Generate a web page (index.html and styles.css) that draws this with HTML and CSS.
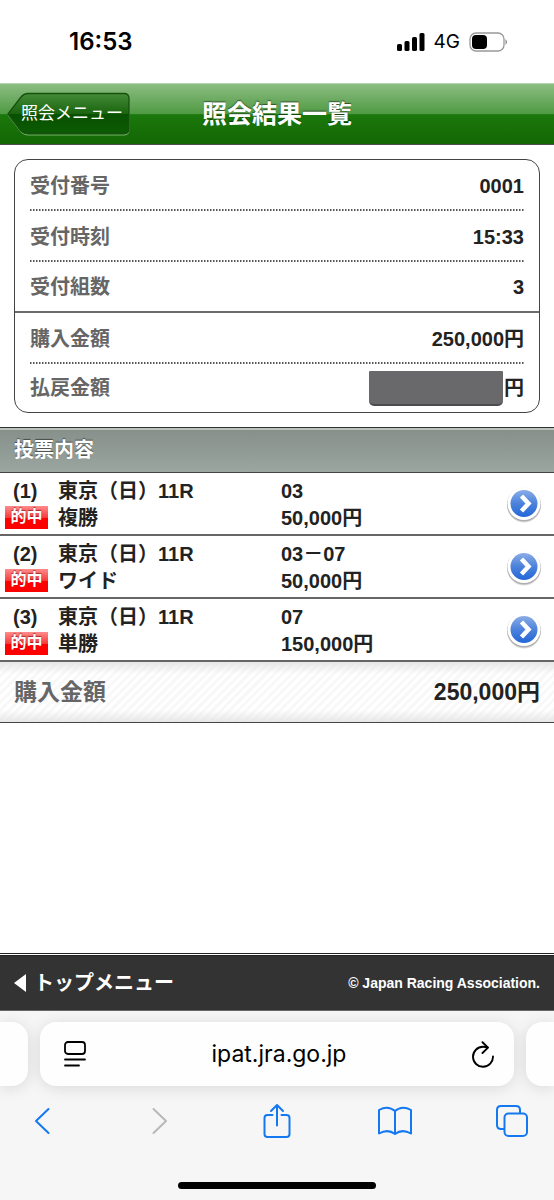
FILE: index.html
```html
<!DOCTYPE html>
<html lang="ja">
<head>
  <meta charset="UTF-8">
  <meta name="viewport" content="width=device-width, initial-scale=1.0">
  <title>照会結果一覧</title>
  <link rel="stylesheet" href="styles.css">
</head>
<body>
<div class="status-bar">
  <span class="time">16:53</span>
  <div class="status-icons">
    <svg width="28" height="19" viewBox="0 0 28 19">
      <rect x="0" y="12" width="5" height="7" rx="1.5"/>
      <rect x="7.500" y="9" width="5" height="10" rx="1.5"/>
      <rect x="15" y="5" width="5" height="14" rx="1.5"/>
      <rect x="22.500" y="1" width="5" height="18" rx="1.5"/>
    </svg>
    <span class="network">4G</span>
    <svg width="39" height="20" viewBox="0 0 39 20">
      <rect x="1" y="1" width="34" height="18" rx="6" fill="none" stroke="#999" stroke-width="1.3"/>
      <rect x="3" y="3" width="15" height="14" rx="4"/>
      <path d="M36.500 7 q3 3 0 6z" fill="#888"/>
    </svg>
  </div>
</div>

<header class="header">
  <a href="#" class="back-btn">
    <svg width="123" height="44" viewBox="0 0 123 44">
      <defs>
        <linearGradient id="backFill" x1="0" y1="0" x2="0" y2="1">
          <stop offset="0" stop-color="#458b38"/>
          <stop offset="0.5" stop-color="#1b650f"/>
          <stop offset="0.51" stop-color="#085000"/>
          <stop offset="1" stop-color="#0c5b03"/>
        </linearGradient>
      </defs>
      <path d="M1 23 L14 6 Q17 3 21 3 H117 Q122 3 122 8 V38 Q122 43 117 43 H21 Q17 43 14 40z" fill="none" stroke="#7bb671"/>
      <path d="M1 22 L14 5 Q17 1.500 21 1.500 H117 Q122 1.500 122 6.500 V37 Q122 41.500 117 41.500 H21 Q17 41.500 14 39z" fill="url(#backFill)" stroke="#17500f" stroke-width="1.3"/>
    </svg>
    <span>照会メニュー</span>
  </a>
  <h1>照会結果一覧</h1>
</header>

<main>
  <dl class="summary">
    <div class="row"><dt>受付番号</dt><dd>0001</dd></div>
    <div class="row"><dt>受付時刻</dt><dd>15:33</dd></div>
    <div class="row solid"><dt>受付組数</dt><dd>3</dd></div>
    <div class="row"><dt>購入金額</dt><dd>250,000円</dd></div>
    <div class="row"><dt>払戻金額</dt><dd><span class="mask"></span>円</dd></div>
  </dl>

  <h2>投票内容</h2>

  <ul class="bets">
    <li>
      <a href="#" class="bet">
        <span class="num">(1)</span><span class="race">東京（日）11R</span><span class="pick">03</span>
        <span class="hit">的中</span><span class="type">複勝</span><span class="price">50,000円</span>
        <svg class="arrow" width="38" height="38" viewBox="0 0 38 38"><use href="#go"/></svg>
      </a>
    </li>
    <li>
      <a href="#" class="bet">
        <span class="num">(2)</span><span class="race">東京（日）11R</span><span class="pick">03－07</span>
        <span class="hit">的中</span><span class="type">ワイド</span><span class="price">50,000円</span>
        <svg class="arrow" width="38" height="38" viewBox="0 0 38 38"><use href="#go"/></svg>
      </a>
    </li>
    <li>
      <a href="#" class="bet">
        <span class="num">(3)</span><span class="race">東京（日）11R</span><span class="pick">07</span>
        <span class="hit">的中</span><span class="type">単勝</span><span class="price">150,000円</span>
        <svg class="arrow" width="38" height="38" viewBox="0 0 38 38"><use href="#go"/></svg>
      </a>
    </li>
  </ul>

  <div class="total">
    <span class="total-label">購入金額</span>
    <span>250,000円</span>
  </div>
</main>

<footer class="footer">
  <a href="#">
    <svg width="12" height="18" viewBox="0 0 12 18"><path d="M12 0 V18 L0 9z" fill="#fff"/></svg>
    トップメニュー
  </a>
  <small>© Japan Racing Association.</small>
</footer>

<div class="browser">
  <div class="tabs">
    <div class="tab-edge left"></div>
    <div class="address">
      <button type="button" aria-label="ページ設定">
        <svg width="22" height="26" viewBox="0 0 22 26" fill="none" stroke="#000" stroke-width="1.8" stroke-linecap="round">
          <rect x="1" y="1" width="20" height="12" rx="3"/>
          <path d="M1 18.500 H21 M1 24.500 H15"/>
        </svg>
      </button>
      <span class="url">ipat.jra.go.jp</span>
      <button type="button" aria-label="再読み込み">
        <svg width="22" height="27" viewBox="0 0 22 27" fill="none" stroke="#000" stroke-width="1.9" stroke-linecap="round" stroke-linejoin="round">
          <path d="M21 15.500 A10 10 0 1 1 11 5.800 Q13.500 5.800 15.500 6.500"/>
          <path d="M10.500 1.200 L16 6.600 L10.500 12"/>
        </svg>
      </button>
    </div>
    <div class="tab-edge right"></div>
  </div>
  <nav class="toolbar">
    <button type="button" aria-label="戻る">
      <svg width="16" height="28" viewBox="0 0 16 28"><path d="M14.500 2 L2 14 L14.500 26"/></svg>
    </button>
    <button type="button" aria-label="進む" class="off">
      <svg width="16" height="28" viewBox="0 0 16 28"><path d="M1.500 2 L14 14 L1.500 26"/></svg>
    </button>
    <button type="button" aria-label="共有">
      <svg width="28" height="36" viewBox="0 0 28 36"><path d="M9.500 12 H4.500 Q1.500 12 1.500 15 V31 Q1.500 34 4.500 34 H23.500 Q26.500 34 26.500 31 V15 Q26.500 12 23.500 12 H18.500 M14 22.500 V2 M8 8 L14 2 L20 8"/></svg>
    </button>
    <button type="button" aria-label="ブックマーク">
      <svg width="34" height="30" viewBox="0 0 34 30"><path d="M17 5 Q10 -1 1 4 V27.500 Q10 22.500 17 28 Q24 22.500 33 27.500 V4 Q24 -1 17 5z M17 5 V28"/></svg>
    </button>
    <button type="button" aria-label="タブ">
      <svg width="32" height="32" viewBox="0 0 32 32"><path d="M8 24 H5 Q1 24 1 20 V5 Q1 1 5 1 H20 Q24 1 24 5 V8"/><rect x="8.500" y="8.500" width="22.500" height="22.500" rx="4"/></svg>
    </button>
  </nav>
  <div class="home-bar"></div>
</div>

<svg class="defs" width="0" height="0">
  <defs>
    <linearGradient id="goFill" x1="0" y1="0" x2="0" y2="1">
      <stop offset="0" stop-color="#8bade6"/>
      <stop offset="0.5" stop-color="#4c82dc"/>
      <stop offset="1" stop-color="#2467d8"/>
    </linearGradient>
    <symbol id="go" viewBox="0 0 38 38">
      <circle cx="19" cy="20.500" r="17" fill="#000" opacity="0.12"/>
      <circle cx="19" cy="19.500" r="17" fill="#000" opacity="0.22"/>
      <circle cx="19" cy="18.500" r="16.500" fill="#fff"/>
      <circle cx="19" cy="18.500" r="13.500" fill="url(#goFill)"/>
      <path d="M16.500 11 L23.500 18.500 L16.500 26" fill="none" stroke="#fff" stroke-width="4.500"/>
    </symbol>
  </defs>
</svg>
</body>
</html>
```
FILE: styles.css
```css
* { margin: 0; padding: 0; box-sizing: border-box; }

body {
  font-family: "Liberation Sans", "Noto Sans CJK JP", sans-serif;
  font-size: 20px;
  font-weight: bold;
  line-height: 26px;
  color: #222;
  background: #fff;
  min-height: 100vh;
  display: flex;
  flex-direction: column;
}

a { color: inherit; text-decoration: none; }
ul { list-style: none; }
button { background: none; border: none; cursor: pointer; }
svg { display: block; }
.defs { position: absolute; }

/* Phone status bar */
.status-bar {
  display: flex;
  justify-content: space-between;
  align-items: center;
  height: 83px;
  padding: 0 46px 0 69px;
  font-family: Inter, sans-serif;
  color: #000;
}

.time { font-size: 24px; font-weight: 600; }
.status-icons { display: flex; align-items: center; gap: 9px; }
.network { font-size: 19px; font-weight: 400; }

/* Header */
.header {
  display: grid;
  grid-template-columns: 1fr auto 1fr;
  align-items: center;
  height: 62px;
  padding: 0 7px;
  color: #fff;
  background: linear-gradient(#8cbd82, #4f9a43 50%, #1b780c 51%, #136704);
  border-top: 1px solid #b5d5af;
  border-bottom: 1px solid #4c4f4c;
}

.header h1 {
  font-size: 25px;
  line-height: 36px;
  text-shadow: 0 -1px 1px rgba(0, 0, 0, 0.5);
}

.back-btn {
  display: grid;
  justify-self: start;
  align-items: center;
  font-size: 17px;
  font-weight: normal;
}

.back-btn svg, .back-btn span { grid-area: 1 / 1; }
.back-btn span { padding-left: 14px; z-index: 1; }

/* Receipt summary */
.summary {
  margin: 14px;
  border: 1px solid #444;
  border-radius: 14px;
}

.row {
  display: flex;
  justify-content: space-between;
  align-items: center;
  height: 51px;
  padding: 0 15px;
  background: repeating-linear-gradient(90deg, #555 0 1px, #aaa 1px 2px, #fff 2px 3px) 15px 100% / calc(100% - 30px) 2px no-repeat;
}

.row.solid { background: none; border-bottom: 2px solid #6c6c6e; }
.row:last-child { height: 48px; background: none; }

.row dt { color: #666; }
.row dd { display: flex; align-items: center; gap: 1px; }

.mask {
  width: 134px;
  height: 35px;
  background: #69696b;
  border-bottom: 2px solid #4b4b50;
  border-radius: 1px 1px 5px 5px;
}

h2 {
  height: 46px;
  padding-left: 14px;
  font-size: 20px;
  line-height: 45px;
  color: #fff;
  text-shadow: 0 -1px 1px rgba(0, 0, 0, 0.5);
  background: linear-gradient(#b9c2bd 2px, #87908b 2px, #9ba6a0);
  border-top: 1px solid #333;
  border-bottom: 1px solid #444;
}

/* Bets */
.bets li { border-bottom: 2px solid #666; }

.bet {
  display: grid;
  grid-template-columns: 53px 223px 1fr 38px;
  grid-template-rows: 27px 27px;
  align-items: center;
  height: 61px;
  padding: 4px 11px 3px 5px;
}

.num { padding-left: 8px; }
.arrow { grid-column: 4; grid-row: 1 / 3; }

.hit {
  width: 43px;
  height: 23px;
  font-size: 16px;
  line-height: 22px;
  text-align: center;
  color: #fff;
  text-shadow: 0 -1px 1px rgba(120, 0, 0, 0.6);
  background: linear-gradient(#ff8c8c, #f63c3c 50%, #f00 51%);
}

.total {
  display: flex;
  justify-content: space-between;
  align-items: center;
  height: 61px;
  padding: 0 14px;
  font-size: 23px;
  border-bottom: 1px solid #444;
  background:
    linear-gradient(rgba(225, 225, 225, 0.8), transparent 20%, transparent 80%, rgba(225, 225, 225, 0.8)),
    repeating-linear-gradient(135deg, #fff 0 3px, #f8f8f8 3px 6px);
}

.total-label { color: #666; }

/* Footer */
.footer {
  display: flex;
  justify-content: space-between;
  align-items: center;
  height: 58px;
  margin-top: auto;
  padding: 0 14px;
  color: #fff;
  background: #333 padding-box;
  border-top: 3px double #222;
  border-bottom: 1px solid #666;
}

.footer a { display: flex; align-items: center; gap: 8px; }
.footer small { font-size: 14px; }

/* Safari bottom bar */
.browser {
  height: 189px;
  padding: 11px 0;
  background: #f6f6f6;
  overflow: hidden;
}

.tabs {
  display: grid;
  grid-template-columns: 28px 1fr 28px;
  gap: 12px;
}

.tab-edge, .address {
  height: 64px;
  background: #fefefe;
  border-radius: 16px;
  box-shadow: 0 2px 16px rgba(0, 0, 0, 0.12);
}

.tab-edge.left { border-radius: 0 16px 16px 0; }
.tab-edge.right { border-radius: 16px 0 0 16px; }

.address {
  display: flex;
  justify-content: space-between;
  align-items: center;
  padding: 0 20px 0 24px;
}

.url {
  font-family: Inter, sans-serif;
  font-size: 23px;
  font-weight: 400;
  color: #000;
}

.toolbar {
  display: flex;
  justify-content: space-between;
  align-items: center;
  height: 70px;
  padding: 0 25px;
}

.toolbar button {
  display: flex;
  justify-content: center;
  width: 34px;
}

.toolbar svg {
  fill: none;
  stroke: #1479f0;
  stroke-width: 2;
  stroke-linecap: round;
  stroke-linejoin: round;
}

.toolbar .off svg { stroke: #b8b8b8; }

.home-bar {
  width: 198px;
  height: 7px;
  margin: 26px auto 0;
  background: #000;
  border-radius: 4px;
}
```
